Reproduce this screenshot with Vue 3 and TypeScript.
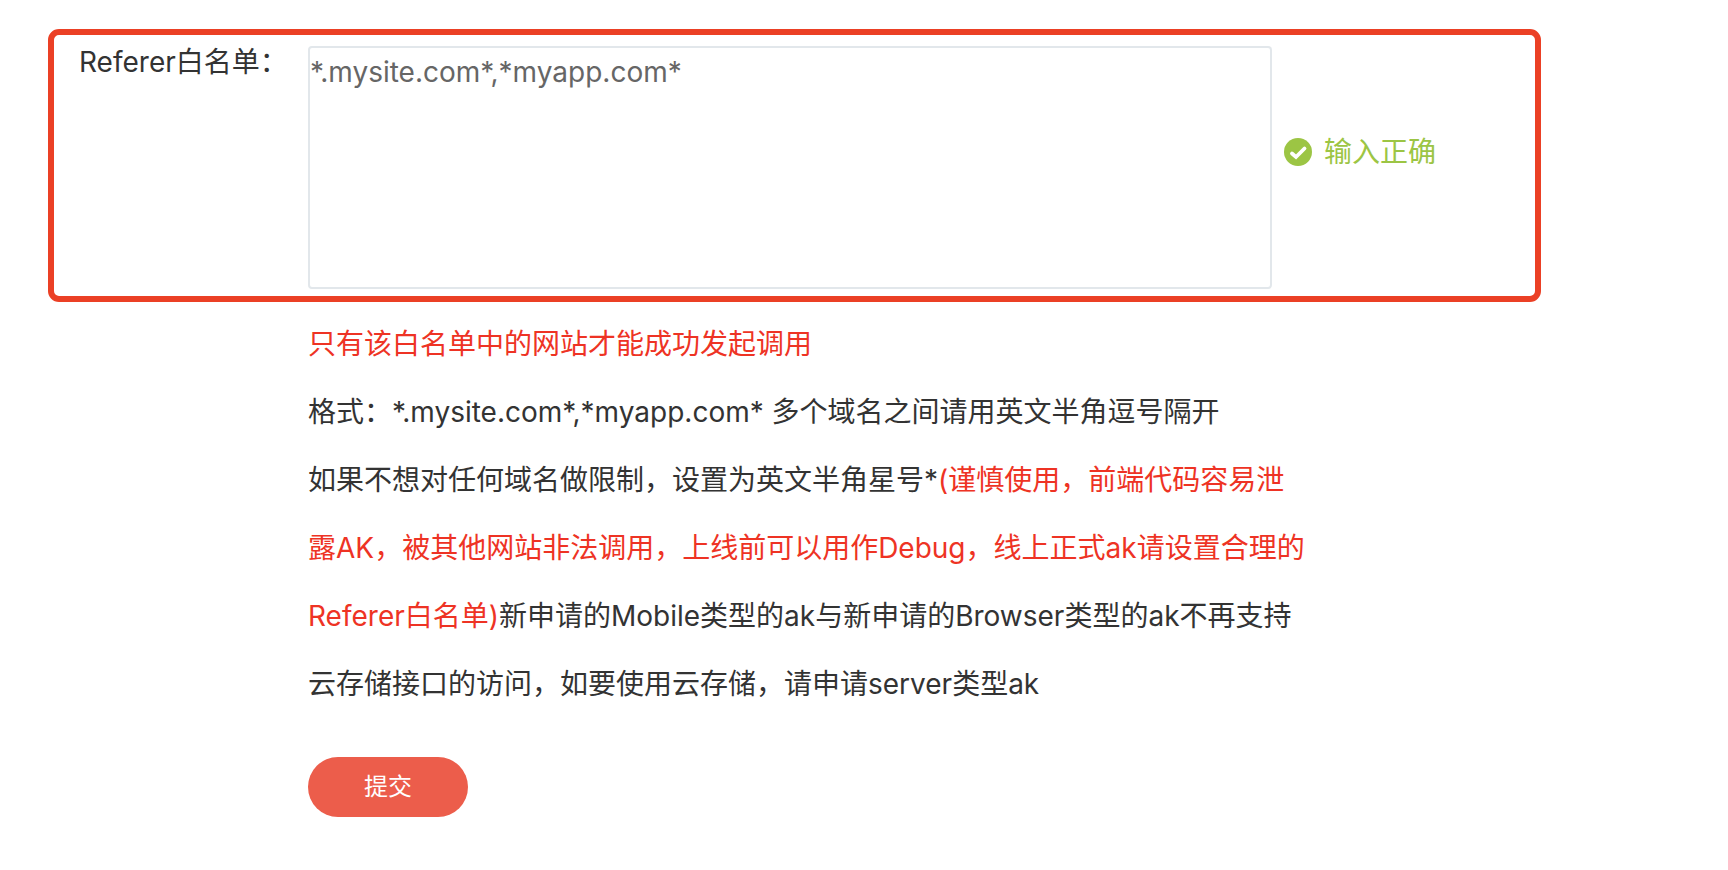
<script setup lang="ts">
import { ref } from 'vue'

const whitelist = ref<string>('*.mysite.com*,*myapp.com*')
</script>

<template>
  <form class="page" @submit.prevent>
    <div class="field">
      <label class="field-label" for="referer">Referer白名单：</label>
      <textarea id="referer" v-model="whitelist" class="field-input" spellcheck="false"></textarea>
      <div class="status" role="status">
        <svg class="status-icon" viewBox="0 0 28 28" aria-hidden="true">
          <circle cx="14" cy="14" r="14" fill="#9cc544" />
          <path d="M8 15.5l4 3.5L20.5 10.5" fill="none" stroke="#fff" stroke-width="3.8" stroke-linecap="round" />
        </svg>
        <span>输入正确</span>
      </div>
    </div>
    <div class="details">
      <p class="warn">只有该白名单中的网站才能成功发起调用</p>
      <p>格式：*.mysite.com*,*myapp.com* 多个域名之间请用英文半角逗号隔开</p>
      <p>如果不想对任何域名做限制，设置为英文半角星号*<span class="warn">(谨慎使用，前端代码容易泄露AK，被其他网站非法调用，上线前可以用作Debug，线上正式ak请设置合理的Referer白名单)</span>新申请的Mobile类型的ak与新申请的Browser类型的ak不再支持云存储接口的访问，如要使用云存储，请申请server类型ak</p>
      <button class="submit" type="submit">提交</button>
    </div>
  </form>
</template>

<style>
body {
  margin: 0;
  background: #fff;
}
</style>

<style scoped>
.page {
  padding: 29px 187px 32px 48px;
  color: #333;
  font-family: Inter, "Noto Sans CJK SC", sans-serif;
  font-size: 28px;
  line-height: 40px;
}

.field {
  display: flex;
  align-items: flex-start;
  box-sizing: border-box;
  padding: 11px 99px 7px 25px;
  border: 6px solid #eb4025;
  border-radius: 11px;
}

.field-label {
  flex: 0 0 229px;
  line-height: 32px;
  white-space: nowrap;
}

.field-input {
  flex: 1;
  min-width: 0;
  box-sizing: border-box;
  height: 243px;
  margin: 0;
  padding: 4px 0;
  border: 2px solid #e2e7eb;
  border-radius: 4px;
  outline: none;
  resize: none;
  background: #fff;
  color: #666;
  font: inherit;
}

.status {
  display: flex;
  align-items: center;
  gap: 12px;
  margin-left: 12px;
  padding-top: 86px;
  color: #9cc544;
  white-space: nowrap;
}

.status-icon {
  width: 28px;
  height: 28px;
}

.details {
  max-width: 1000px;
  padding: 8px 0 0 260px;
  line-height: 68px;
}

.details p {
  margin: 0;
}

.warn {
  color: #ee3324;
}

.submit {
  display: block;
  width: 160px;
  height: 60px;
  margin-top: 39px;
  padding: 0;
  border: 0;
  border-radius: 30px;
  background: #ec5d4b;
  color: #fff;
  font: inherit;
  font-size: 24px;
  line-height: 32px;
  cursor: pointer;
}
</style>
